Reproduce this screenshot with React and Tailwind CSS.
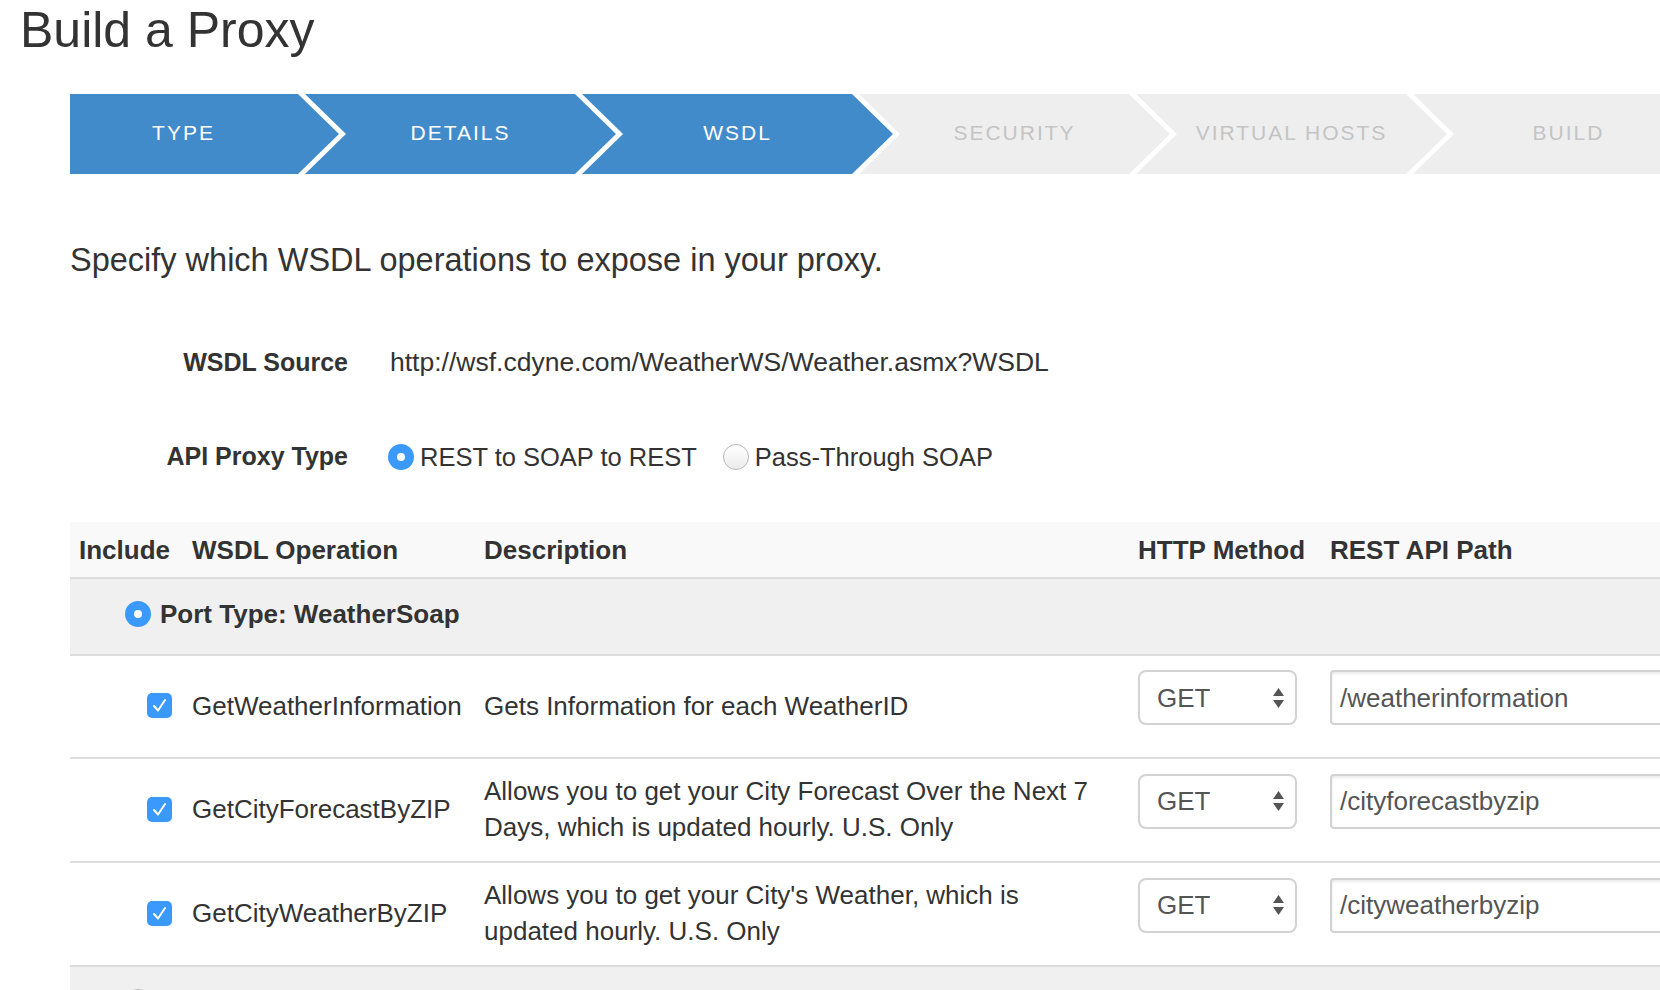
import { useState } from 'react';

const steps = [
    { label: 'TYPE', active: true },
    { label: 'DETAILS', active: true },
    { label: 'WSDL', active: true },
    { label: 'SECURITY', active: false },
    { label: 'VIRTUAL HOSTS', active: false },
    { label: 'BUILD', active: false },
];

const operations = [
    {
        name: 'GetWeatherInformation',
        desc: 'Gets Information for each WeatherID',
        path: '/weatherinformation',
    },
    {
        name: 'GetCityForecastByZIP',
        desc: 'Allows you to get your City Forecast Over the Next 7 Days, which is updated hourly. U.S. Only',
        path: '/cityforecastbyzip',
    },
    {
        name: 'GetCityWeatherByZIP',
        desc: "Allows you to get your City's Weather, which is updated hourly. U.S. Only",
        path: '/cityweatherbyzip',
    },
];

const cols = 'grid grid-cols-[113px_292px_654px_192px_1fr]';

function Radio({ checked }) {
    return checked ? (
        <span className="flex h-[26px] w-[26px] shrink-0 items-center justify-center rounded-full bg-[#3b99fc]">
            <span className="h-[8px] w-[8px] rounded-full bg-white" />
        </span>
    ) : (
        <span className="h-[26px] w-[26px] shrink-0 rounded-full border border-[#b9b9b9] bg-linear-to-b from-white to-[#ececec]" />
    );
}

function Checkbox() {
    return (
        <span className="flex h-[25px] w-[25px] items-center justify-center rounded-[5px] bg-[#3b99fc]">
            <svg width="25" height="25" viewBox="0 0 25 25">
                <path d="M7 13 L11 17.5 L18 7" fill="none" stroke="white" strokeWidth="2" strokeLinecap="round" strokeLinejoin="round" />
            </svg>
        </span>
    );
}

export default function App() {
    const [proxyType, setProxyType] = useState('rest');

    return (
        <div className="h-screen w-screen overflow-hidden bg-white font-['Liberation_Sans',Arial,sans-serif] text-[#333]">
            <h1 className="pl-[20px] pt-[5px] text-[50px] leading-[50px] font-normal">Build a Proxy</h1>

            {/* Wizard steps */}
            <div className="ml-[70px] mt-[39px] overflow-hidden">
                <div className="flex">
                    {steps.map((step, i) => (
                        <div
                            key={step.label}
                            className={`flex h-[80px] w-[311px] shrink-0 items-center justify-center pb-[2px] text-[21px] tracking-[2px] [clip-path:polygon(0_0,calc(100%_-_41px)_0,100%_50%,calc(100%_-_41px)_100%,0_100%,41px_50%)] ${i === 0 ? 'ml-[-42px]' : 'ml-[-34px]'} ${step.active ? 'bg-[#428bca] text-white' : 'bg-[#eeeeee] text-[#c4c4c4]'}`}
                        >
                            {step.label}
                        </div>
                    ))}
                </div>
            </div>

            <div className="pl-[70px]">
                <p className="mt-[66px] text-[32.5px] leading-[40px]">Specify which WSDL operations to expose in your proxy.</p>

                <div className="mt-[65px] flex h-[36px] items-center">
                    <div className="w-[278px] text-right text-[25px] font-bold">WSDL Source</div>
                    <div className="ml-[42px] text-[26.5px]">http://wsf.cdyne.com/WeatherWS/Weather.asmx?WSDL</div>
                </div>

                <div className="mt-[58px] flex h-[36px] items-center">
                    <div className="w-[278px] text-right text-[25px] font-bold">API Proxy Type</div>
                    <div className="ml-[40px] flex items-center text-[25.5px]">
                        <button className="flex items-center gap-[6px]" onClick={() => setProxyType('rest')}>
                            <Radio checked={proxyType === 'rest'} />
                            <span>REST to SOAP to REST</span>
                        </button>
                        <button className="ml-[26px] flex items-center gap-[6px]" onClick={() => setProxyType('pass')}>
                            <Radio checked={proxyType === 'pass'} />
                            <span>Pass-Through SOAP</span>
                        </button>
                    </div>
                </div>

                {/* Operations table */}
                <div className="mt-[47px] w-[1700px]">
                    <div className={`${cols} h-[57px] items-center border-b-2 border-[#dddddd] bg-[#f9f9f9] pt-[2px] text-[26px] font-bold`}>
                        <div className="pl-[9px]">Include</div>
                        <div className="pl-[9px]">WSDL Operation</div>
                        <div className="pl-[9px]">Description</div>
                        <div className="pl-[9px]">HTTP Method</div>
                        <div className="pl-[9px]">REST API Path</div>
                    </div>

                    <div className="flex h-[77px] items-center gap-[9px] border-b-2 border-[#dddddd] bg-[#f0f0f0] pb-[5px] pl-[55px] text-[26px] font-bold">
                        <Radio checked />
                        <span>Port Type: WeatherSoap</span>
                    </div>

                    {operations.map((op) => (
                        <div key={op.name} className={`${cols} items-center border-b-2 border-[#dddddd] pt-[14px] pb-[16px] text-[26px] leading-[36px]`}>
                            <div className="flex pl-[77px]">
                                <Checkbox />
                            </div>
                            <div className="pl-[9px]">{op.name}</div>
                            <div className="pl-[9px] pr-[25px]">{op.desc}</div>
                            <div className="pl-[9px]">
                                <div className="mb-[16px] flex h-[55px] w-[159px] items-center justify-between rounded-[8px] border-2 border-[#d2d2d2] bg-white pl-[17px] pr-[10px] text-[#555]">
                                    <span>GET</span>
                                    <svg width="13" height="22" viewBox="0 0 13 22">
                                        <path d="M6.5 1 L12 9 H1 Z M1 13 H12 L6.5 21 Z" fill="#555" />
                                    </svg>
                                </div>
                            </div>
                            <div className="pl-[9px]">
                                <div className="mb-[16px] flex h-[55px] items-center rounded-[4px] border-2 border-[#d2d2d2] bg-white pl-[8px] text-[#555] shadow-[inset_0_2px_3px_rgba(0,0,0,0.08)]">
                                    {op.path}
                                </div>
                            </div>
                        </div>
                    ))}

                    <div className="flex h-[77px] items-center border-b-2 border-[#dddddd] bg-[#f0f0f0] pb-[5px] pl-[55px]">
                        <Radio checked={false} />
                    </div>
                </div>
            </div>
        </div>
    );
}
